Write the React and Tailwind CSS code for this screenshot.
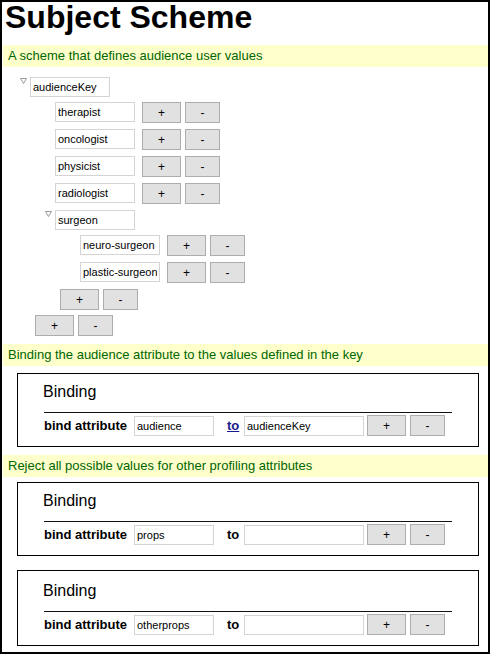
import React from "react";

const font = { fontFamily: '"Liberation Sans", Arial, sans-serif' };

function Field({ value, w = "w-[80px]" }) {
  return (
    <input
      readOnly
      defaultValue={value}
      className={`${w} h-[20px] shrink-0 border border-[#d4d4d4] bg-white px-[2px] text-[11px] text-black outline-none`}
    />
  );
}

function Btn({ children, w = "w-[39px]", ml = "ml-[4px]" }) {
  return (
    <button className={`${w} ${ml} h-[21px] shrink-0 border border-[#adadad] bg-[#e1e1e1] text-[12px] leading-none text-black`}>
      {children}
    </button>
  );
}

function Toggle() {
  return (
    <svg width="7" height="6" viewBox="0 0 7 6" className="mt-[1px] mr-[3px] shrink-0">
      <polygon points="0.5,0.5 6.5,0.5 3.5,5.5" fill="none" stroke="#9a9a9a" strokeWidth="1" />
    </svg>
  );
}

function Leaf({ label }) {
  return (
    <div className="flex items-start h-[21px] mb-[6px] pl-[10px]">
      <Field value={label} />
      <Btn ml="ml-[7px]">+</Btn>
      <Btn w="w-[35px]">-</Btn>
    </div>
  );
}

function AddRow({ last }) {
  return (
    <div className={`flex items-start h-[21px] pl-[15px] ${last ? "" : "mb-[5px]"}`}>
      <Btn ml="ml-0">+</Btn>
      <Btn w="w-[35px]">-</Btn>
    </div>
  );
}

function Node({ label, children, last }) {
  return (
    <div>
      <div className="flex items-start h-[20px] mb-[5px]">
        <Toggle />
        <Field value={label} />
      </div>
      <div className="ml-[25px]">{children}</div>
      <AddRow last={last} />
    </div>
  );
}

function Note({ text, mt }) {
  return (
    <div className={`${mt} ml-[1px] h-[22px] bg-[#ffffcc] pl-[5px] text-[13px] leading-[22px] text-[#006600]`}>
      {text}
    </div>
  );
}

function Binding({ attr, target, link, mt, pt = "pt-[9px]" }) {
  return (
    <div className={`${mt} ml-[15px] w-[462px] border border-black ${pt} pb-[10px] pl-[26px] pr-[26px]`}>
      <div className="text-[16px] leading-[18px] text-black -ml-[1px] mb-[11px]">Binding</div>
      <div className="border-t border-[#111] pt-[2px]">
        <div className="flex items-center h-[21px]">
          <div className="w-[90px] shrink-0 text-[13px] font-bold text-black">bind attribute</div>
          <Field value={attr} />
          <div className="w-[30px] shrink-0 pl-[13px] text-[13px] font-bold">
            {link ? (
              <a href="#" className="text-[#1a1a8c] underline">to</a>
            ) : (
              <span className="text-black">to</span>
            )}
          </div>
          <Field value={target} w="w-[120px]" />
          <Btn ml="ml-[3px]">+</Btn>
          <Btn w="w-[35px]">-</Btn>
        </div>
      </div>
    </div>
  );
}

export default function App() {
  return (
    <div style={font} className="w-[490px] h-[654px] overflow-hidden border-2 border-black bg-white">
      <h1 className="pl-[3px] text-[32px] font-bold leading-[30px] text-black">Subject Scheme</h1>
      <Note mt="mt-[13px]" text="A scheme that defines audience user values" />

      <div className="mt-[10px] pl-[18px]">
        <Node label="audienceKey" last>
          <Leaf label="therapist" />
          <Leaf label="oncologist" />
          <Leaf label="physicist" />
          <Leaf label="radiologist" />
          <Node label="surgeon">
            <Leaf label="neuro-surgeon" />
            <Leaf label="plastic-surgeon" />
          </Node>
        </Node>
      </div>

      <Note mt="mt-[8px]" text="Binding the audience attribute to the values defined in the key" />
      <Binding mt="mt-[7px]" attr="audience" target="audienceKey" link />

      <Note mt="mt-[8px]" text="Reject all possible values for other profiling attributes" />
      <Binding mt="mt-[5px]" attr="props" target="" />
      <Binding mt="mt-[14px]" pt="pt-[11px]" attr="otherprops" target="" />
    </div>
  );
}
